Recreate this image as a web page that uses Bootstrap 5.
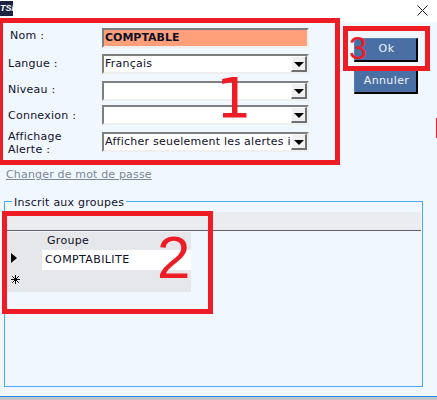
<!DOCTYPE html>
<html lang="fr">
<head>
    <meta charset="UTF-8">
    <title>Utilisateur</title>
    <link href="https://cdn.jsdelivr.net/npm/bootstrap@5.3.0/dist/css/bootstrap.min.css" rel="stylesheet">
    <style>
        body {
            background-color: #f0f7ff;
            font-family: "DejaVu Sans", sans-serif;
            font-size: 11px;
            color: #101028;
            width: 437px;
            height: 400px;
            overflow: hidden;
        }
        .win-frame {
            position: relative;
            width: 437px;
            height: 400px;
        }
        .title-strip {
            height: 22px;
            background: #fff;
        }
        .app-logo {
            width: 13px;
            height: 15px;
            margin-top: 1px;
            background: #1c2340;
            color: #fff;
            font: italic 700 9px "Liberation Sans", sans-serif;
            line-height: 15px;
            overflow: hidden;
            white-space: nowrap;
        }
        .close-x {
            margin: 5px 9px 0 0;
        }
        .top-area {
            height: 144px;
            padding: 6px 0 0 8px;
        }
        .form-col {
            width: 301px;
        }
        .field-row {
            height: 20px;
        }
        .row-langue { margin-top: 6px; }
        .row-niveau { margin-top: 7px; }
        .row-connexion { margin-top: 4px; }
        .row-alerte { margin-top: 7px; }
        .field-label {
            width: 94px;
            line-height: 13px;
            letter-spacing: .25px;
        }
        .label-nom { padding: 0 0 5px 2px; }
        .label-langue { padding-bottom: 2px; }
        .label-niveau { padding-bottom: 4px; }
        .label-alerte { padding-top: 2px; }
        .sunken {
            width: 207px;
            height: 20px;
            border: 2px solid;
            border-color: #7f7f7f #efefef #efefef #7f7f7f;
            background: #fff;
            line-height: 16px;
            padding-left: 1px;
            overflow: hidden;
            white-space: nowrap;
            letter-spacing: .25px;
        }
        .name-field {
            background: #ffa07a;
            font-weight: 700;
            letter-spacing: 0;
        }
        .combo-text {
            overflow: hidden;
        }
        .combo-arrow {
            flex: 0 0 16px;
            height: 16px;
            background: #f0f0f0;
            border-style: solid;
            border-width: 1px 2px 2px 1px;
            border-color: #fff #707070 #707070 #fff;
        }
        .combo-arrow::after {
            content: "";
            border-left: 5px solid transparent;
            border-right: 5px solid transparent;
            border-top: 5px solid #000;
            margin-top: 2px;
        }
        .action-col {
            width: 64px;
            margin: 10px 0 0 45px;
        }
        .win-btn {
            height: 24px;
            background: #4a6fa5;
            color: #f0f4fa;
            border: 1px solid;
            border-color: #5d7fb0 #000 #000 #5d7fb0;
            border-width: 1px 2px 2px 1px;
            font-size: 11px;
            padding: 0 0 0 2px;
            letter-spacing: .4px;
        }
        .pwd-link {
            height: 35px;
            padding: 1px 0 0 6px;
            color: #7b8794;
            letter-spacing: .17px;
        }
        .pwd-link a {
            color: inherit;
        }
        .group-box {
            position: relative;
            width: 419px;
            height: 186px;
            margin-left: 4px;
            border: 1px solid #4aa8ff;
            padding-top: 10px;
        }
        .group-title {
            position: absolute;
            top: -6px;
            left: 7px;
            padding: 0 2px;
            background: #f0f7ff;
            color: #101028;
            line-height: 14px;
            letter-spacing: .25px;
        }
        .grid-strip {
            height: 19px;
            margin-right: 1px;
            background: #ebecf0;
            border-bottom: 1px solid #5f5f65;
        }
        .grid-wrap {
            width: 184px;
            margin: 1px 0 0 2px;
            background: #e6e7ea;
        }
        .grid-row {
            height: 20px;
        }
        .grid-head {
            height: 18px;
        }
        .row-mark {
            flex: 0 0 35px;
        }
        .mark-icon {
            margin: 0 0 4px 4px;
        }
        .cell-white {
            background: #fff;
            padding-left: 3px;
            line-height: 20px;
            letter-spacing: .4px;
        }
        .head-cell {
            padding-left: 5px;
            line-height: 18px;
            letter-spacing: .3px;
        }
        .new-row {
            height: 22px;
        }
        .status-line {
            position: absolute;
            left: 0;
            right: 0;
            top: 396px;
            height: 4px;
            background: #c2c6c9;
            border-top: 1px solid #1e88e5;
        }
        .red-box {
            position: absolute;
            border: 5px solid #ee1c25;
        }
        .box-one { left: -2px; top: 18px; width: 342px; height: 147px; }
        .box-two { left: 2px; top: 211px; width: 211px; height: 103px; }
        .box-three { left: 343px; top: 26px; width: 87px; height: 45px; }
        .edge-tick {
            position: absolute;
            left: 436px;
            top: 118px;
            width: 1px;
            height: 20px;
            background: #ee1c25;
        }
        .red-num {
            position: absolute;
            color: #ee1c25;
            font-family: "Liberation Sans", sans-serif;
            line-height: 1;
        }
        .num-one { left: 216px; top: 70px; font-size: 56px; font-family: "DejaVu Sans", sans-serif; }
        .num-two { left: 157px; top: 228px; font-size: 60px; }
        .num-three { left: 349px; top: 32px; font-size: 32px; }
    </style>
</head>
<body>
    <div class="win-frame">
        <div class="title-strip d-flex justify-content-between">
            <div class="app-logo text-center">TSI</div>
            <svg class="close-x" width="11" height="11" viewBox="0 0 11 11"><path d="M.5.5l10 10M10.5.5l-10 10" stroke="#222" fill="none"/></svg>
        </div>

        <div class="top-area d-flex">
            <div class="form-col">
                <div class="field-row d-flex align-items-center">
                    <div class="field-label label-nom">Nom :</div>
                    <div class="sunken name-field">COMPTABLE</div>
                </div>
                <div class="field-row row-langue d-flex align-items-center">
                    <div class="field-label label-langue">Langue :</div>
                    <div class="sunken d-flex justify-content-between"><span class="combo-text">Français</span><span class="combo-arrow d-flex align-items-center justify-content-center"></span></div>
                </div>
                <div class="field-row row-niveau d-flex align-items-center">
                    <div class="field-label label-niveau">Niveau :</div>
                    <div class="sunken d-flex justify-content-end"><span class="combo-arrow d-flex align-items-center justify-content-center"></span></div>
                </div>
                <div class="field-row row-connexion d-flex align-items-center">
                    <div class="field-label">Connexion :</div>
                    <div class="sunken d-flex justify-content-end"><span class="combo-arrow d-flex align-items-center justify-content-center"></span></div>
                </div>
                <div class="field-row row-alerte d-flex align-items-center">
                    <div class="field-label label-alerte">Affichage<br>Alerte :</div>
                    <div class="sunken d-flex justify-content-between"><span class="combo-text">Afficher seuelement les alertes i</span><span class="combo-arrow d-flex align-items-center justify-content-center"></span></div>
                </div>
            </div>
            <div class="action-col d-flex flex-column gap-2">
                <button class="win-btn" type="button">Ok</button>
                <button class="win-btn" type="button">Annuler</button>
            </div>
        </div>

        <div class="pwd-link"><a href="#">Changer de mot de passe</a></div>

        <div class="group-box">
            <div class="group-title">Inscrit aux groupes</div>
            <div class="grid-strip"></div>
            <div class="grid-wrap">
                <div class="grid-head d-flex">
                    <div class="row-mark"></div>
                    <div class="head-cell flex-grow-1">Groupe</div>
                </div>
                <div class="grid-row d-flex">
                    <div class="row-mark d-flex align-items-center"><svg class="mark-icon" width="6" height="10" viewBox="0 0 6 10"><path d="M0 0l6 5-6 5z" fill="#000"/></svg></div>
                    <div class="cell-white flex-grow-1">COMPTABILITE</div>
                </div>
                <div class="new-row d-flex">
                    <div class="row-mark d-flex align-items-center"><svg class="mark-icon" width="9" height="9" viewBox="0 0 9 9"><path d="M4.5 0v9M0 4.5h9M1.2 1.2l6.6 6.6M7.8 1.2l-6.6 6.6" stroke="#000" fill="none"/></svg></div>
                    <div class="flex-grow-1"></div>
                </div>
            </div>
        </div>

        <div class="status-line"></div>

        <div class="red-box box-one"></div>
        <div class="red-box box-two"></div>
        <div class="red-box box-three"></div>
        <div class="edge-tick"></div>
        <div class="red-num num-one">1</div>
        <div class="red-num num-two">2</div>
        <div class="red-num num-three">3</div>
    </div>
    <script src="https://cdn.jsdelivr.net/npm/bootstrap@5.3.0/dist/js/bootstrap.bundle.min.js"></script>
</body>
</html>
